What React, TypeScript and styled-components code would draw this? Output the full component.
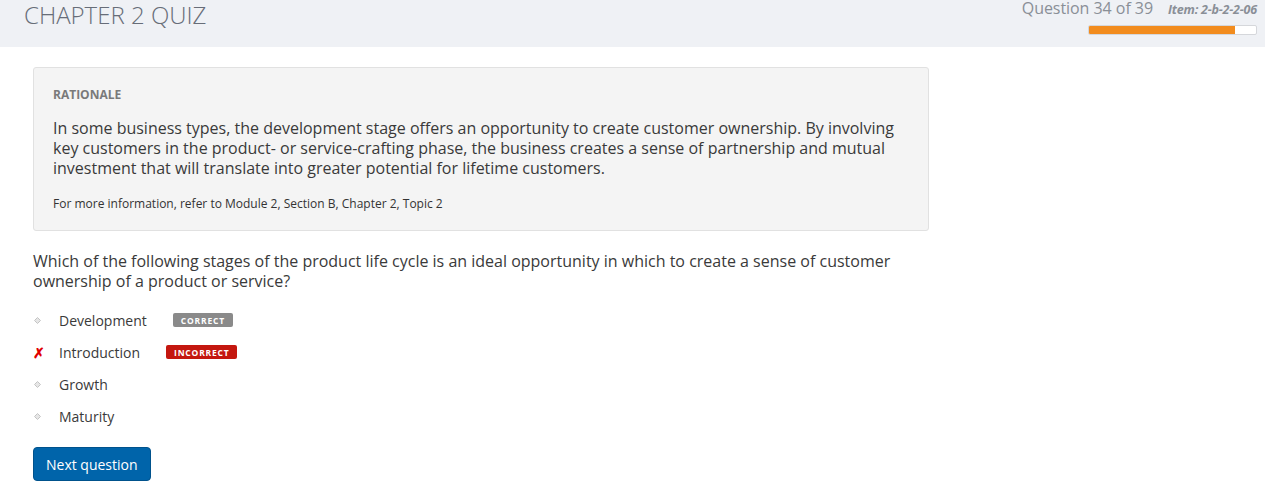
import styled, { createGlobalStyle } from "styled-components";

const GlobalStyle = createGlobalStyle`
  body {
    margin: 0;
    font-family: "Open Sans", "Liberation Sans", sans-serif;
    background: #fff;
    color: #333;
  }
`;

const Header = styled.div`
  height: 47px;
  background-color: #eff1f5;
  display: flex;
  justify-content: space-between;
  align-items: flex-start;
  padding: 0 8px 0 24px;
`;
const Title = styled.h1`
  margin: 0;
  font-size: 24px;
  font-weight: 300;
  color: #676d78;
  line-height: 29px;
`;
const Status = styled.div`
  display: flex;
  flex-direction: column;
  align-items: flex-end;
`;
const StatusLine = styled.div`
  display: flex;
  align-items: baseline;
  gap: 15px;
  line-height: 17px;
`;
const Count = styled.span`
  font-size: 16px;
  color: #8a8f97;
  letter-spacing: -0.05px;
`;
const ItemCode = styled.span`
  font-size: 12.5px;
  font-weight: 700;
  font-style: italic;
  color: #8a8f97;
  letter-spacing: -0.2px;
`;
const Track = styled.div`
  margin-top: 7px;
  width: 167px;
  height: 8px;
  border: 1px solid #d5d7db;
  border-radius: 2px;
  background: #fff;
  overflow: hidden;
`;
const Fill = styled.div`
  height: 100%;
  background: #f28c1e;
`;

const Main = styled.div`
  padding: 20px 33px 0;
  width: 896px;
`;
const RationaleBox = styled.div`
  background: #f4f4f4;
  border: 1px solid #e1e1e1;
  border-radius: 3px;
  padding: 19px 19px 18px;
`;
const Label = styled.div`
  font-size: 12px;
  font-weight: 700;
  color: #7a7a7a;
  line-height: 16px;
`;
const RationaleText = styled.p`
  margin: 15px 0 0;
  font-size: 16px;
  line-height: 20px;
  color: #3a3a3a;
`;
const Reference = styled.p`
  margin: 18px 0 0;
  font-size: 12px;
  line-height: 16px;
  color: #333;
`;
const Question = styled.p`
  margin: 20px 0 0;
  font-size: 16px;
  line-height: 20px;
  color: #3a3a3a;
  padding-right: 30px;
`;
const Options = styled.ul`
  list-style: none;
  margin: 13px 0 0;
  padding: 0;
`;
const Option = styled.li`
  display: flex;
  align-items: center;
  height: 32px;
  font-size: 14px;
  color: #3a3a3a;
`;
const Mark = styled.span`
  width: 26px;
  display: inline-flex;
  align-items: center;
  color: #e00000;
  font-size: 14px;
  font-weight: 700;
`;
const OptionText = styled.span`
  margin-right: 26px;
`;
const Badge = styled.span<{ $kind: "correct" | "incorrect" }>`
  background: ${(p) => (p.$kind === "correct" ? "#8a8a8a" : "#c4170f")};
  color: #fff;
  font-size: 8.5px;
  font-weight: 700;
  letter-spacing: 0.8px;
  padding: 2px 8px 1px;
  border-radius: 2px;
  line-height: 11px;
`;
const NextButton = styled.button`
  margin-top: 15px;
  background: #0064aa;
  color: #fff;
  border: 1px solid #00528c;
  border-radius: 4px;
  font-family: "Open Sans", "Liberation Sans", sans-serif;
  font-size: 14px;
  padding: 0 12px;
  height: 34px;
`;

const Dot = () => (
  <svg width="7" height="7" viewBox="0 0 7 7" style={{ marginLeft: 1 }}>
    <path d="M3.5 0.5 L6.5 3.5 L3.5 6.5 L0.5 3.5 Z" fill="#e6e6e6" stroke="#c4c4c4" strokeWidth="1" />
  </svg>
);

const options = [
  { text: "Development", state: "correct" as const },
  { text: "Introduction", state: "incorrect" as const },
  { text: "Growth" },
  { text: "Maturity" },
];

export default function App() {
  const current = 34;
  const total = 39;
  return (
    <>
      <GlobalStyle />
      <Header>
        <Title>CHAPTER 2 QUIZ</Title>
        <Status>
          <StatusLine>
            <Count>
              Question {current} of {total}
            </Count>
            <ItemCode>Item: 2-b-2-2-06</ItemCode>
          </StatusLine>
          <Track>
            <Fill style={{ width: `${(current / total) * 100}%` }} />
          </Track>
        </Status>
      </Header>
      <Main>
        <RationaleBox>
          <Label>RATIONALE</Label>
          <RationaleText>
            In some business types, the development stage offers an opportunity
            to create customer ownership. By involving key customers in the
            product- or service-crafting phase, the business creates a sense of
            partnership and mutual investment that will translate into greater
            potential for lifetime customers.
          </RationaleText>
          <Reference>
            For more information, refer to Module 2, Section B, Chapter 2, Topic 2
          </Reference>
        </RationaleBox>
        <Question>
          Which of the following stages of the product life cycle is an ideal
          opportunity in which to create a sense of customer ownership of a
          product or service?
        </Question>
        <Options>
          {options.map((o) => (
            <Option key={o.text}>
              <Mark>{o.state === "incorrect" ? "✗" : <Dot />}</Mark>
              <OptionText>{o.text}</OptionText>
              {o.state && (
                <Badge $kind={o.state}>
                  {o.state === "correct" ? "CORRECT" : "INCORRECT"}
                </Badge>
              )}
            </Option>
          ))}
        </Options>
        <NextButton>Next question</NextButton>
      </Main>
    </>
  );
}
